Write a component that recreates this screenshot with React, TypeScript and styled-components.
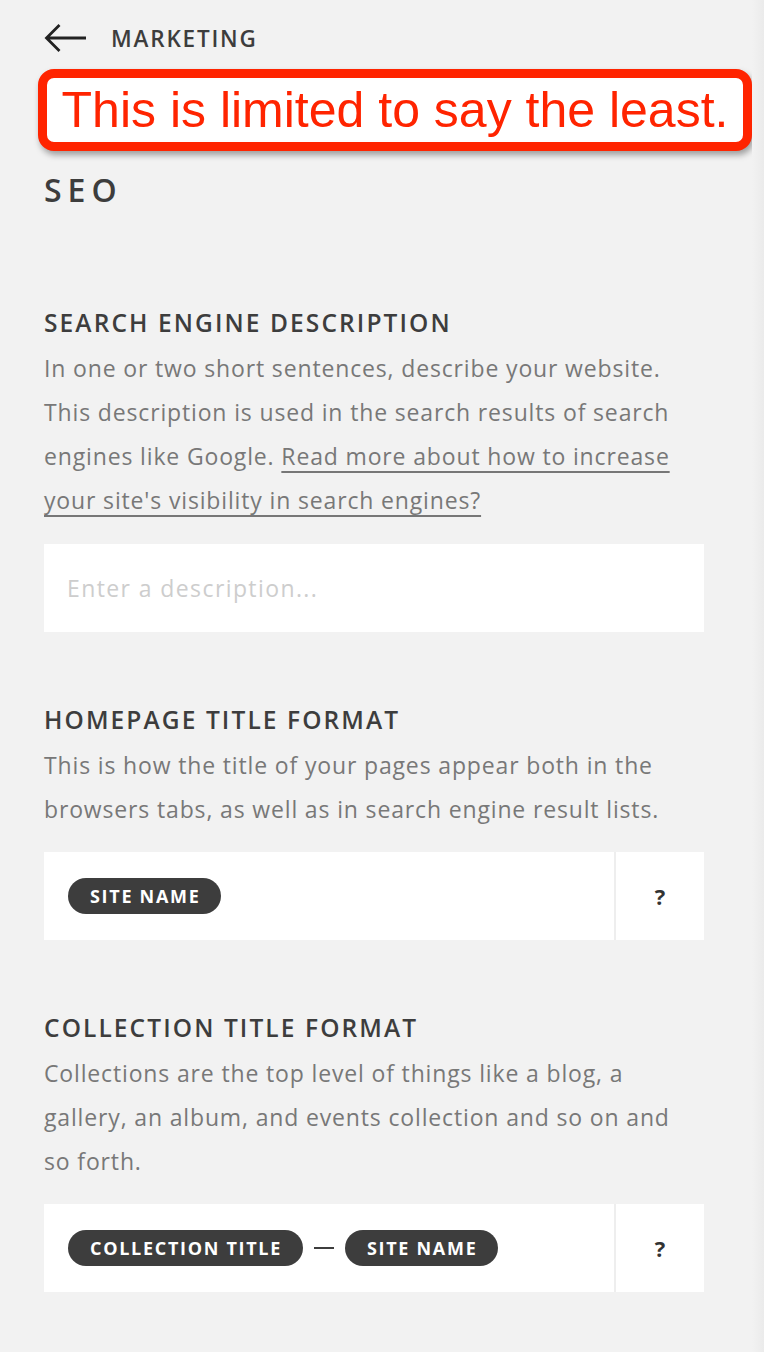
import React from "react";
import styled, { createGlobalStyle } from "styled-components";

const GlobalStyle = createGlobalStyle`
  html, body {
    margin: 0;
    padding: 0;
    background: #f2f2f2;
  }
  body {
    font-family: "Open Sans", "Liberation Sans", sans-serif;
    -webkit-font-smoothing: antialiased;
  }
  * { box-sizing: border-box; }
`;

const Page = styled.div`
  display: flex;
  min-height: 100vh;
  background: #f2f2f2;
`;

const Main = styled.main`
  flex: 1;
  padding: 16px 0 40px 44px;
  display: flex;
  flex-direction: column;
`;

const ScrollEdge = styled.div`
  width: 12px;
  flex: none;
  background: linear-gradient(to right, #f2f2f2 0%, #ebebeb 100%);
`;

const Header = styled.header`
  display: flex;
  align-items: center;
  gap: 23px;
  height: 44px;
`;

const BackButton = styled.button`
  border: 0;
  background: none;
  padding: 0;
  display: flex;
  align-items: center;
  cursor: pointer;
`;

const HeaderTitle = styled.span`
  font-size: 22.5px;
  font-weight: 600;
  letter-spacing: 1.8px;
  color: #3d3d3d;
  text-transform: uppercase;
`;

const Annotation = styled.div`
  margin: 9px 0 0 -6px;
  width: 714px;
  height: 82px;
  border: 9px solid #ff2400;
  border-radius: 16px;
  background: #fff;
  box-shadow: 2px 4px 6px rgba(0, 0, 0, 0.35);
  display: flex;
  align-items: center;
  justify-content: center;
`;

const AnnotationText = styled.span`
  font-family: "Liberation Sans", Arial, sans-serif;
  font-size: 50px;
  line-height: 1;
  color: #ff2400;
  white-space: nowrap;
`;

const PageTitle = styled.h1`
  margin: 19px 0 0;
  font-size: 32px;
  line-height: 40px;
  font-weight: 600;
  color: #3d3d3d;
  letter-spacing: 6px;
`;

const Section = styled.section<{ $first?: boolean }>`
  margin-top: ${(p) => (p.$first ? "91px" : "66px")};
  width: 660px;
`;

const SectionTitle = styled.h2`
  margin: 0;
  font-size: 24.5px;
  line-height: 44px;
  font-weight: 600;
  color: #3d3d3d;
  letter-spacing: 2.1px;
  text-transform: uppercase;
  white-space: nowrap;
`;

const Description = styled.p`
  margin: 0;
  padding-top: 1px;
  width: 720px;
  font-size: 23px;
  line-height: 44px;
  color: #787878;
  white-space: nowrap;
  letter-spacing: 0.85px;
`;

const Link = styled.a`
  color: inherit;
  text-decoration: underline;
  text-decoration-thickness: 2px;
  text-underline-offset: 6px;
  text-decoration-skip-ink: none;
  text-decoration-color: #777;
`;

const DescriptionInput = styled.input`
  display: block;
  margin-top: 22px;
  width: 660px;
  height: 88px;
  border: 0;
  outline: none;
  background: #fff;
  padding: 0 23px;
  font-family: "Open Sans", "Liberation Sans", sans-serif;
  font-size: 23px;
  letter-spacing: 1.4px;
  color: #333;
  &::placeholder {
    color: #cdcdcd;
  }
`;

const FormatBox = styled.div`
  margin-top: 21px;
  display: flex;
  height: 88px;
  background: #fff;
`;

const TokenRow = styled.div`
  flex: 1;
  display: flex;
  align-items: center;
  padding-left: 24px;
  gap: 11px;
`;

const Token = styled.span`
  display: inline-flex;
  align-items: center;
  height: 36px;
  padding: 0 21px 0 22px;
  border-radius: 18px;
  background: #3d3d3d;
  color: #fff;
  font-weight: 700;
  font-size: 18px;
  letter-spacing: 1.7px;
  text-transform: uppercase;
  white-space: nowrap;
`;

const Dash = styled.span`
  width: 20px;
  height: 2px;
  background: #3d3d3d;
`;

const HelpCell = styled.button`
  width: 90px;
  flex: none;
  border: 0;
  border-left: 2px solid #eeeeee;
  background: #fff;
  display: flex;
  align-items: center;
  justify-content: center;
  font-family: "Open Sans", "Liberation Sans", sans-serif;
  font-weight: 700;
  font-size: 22px;
  color: #333;
  cursor: pointer;
  padding: 0;
`;

const BackArrow = () => (
  <svg width="44" height="30" viewBox="0 0 44 30" fill="none">
    <path
      d="M2.5 15H42M15.5 2L2.5 15L15.5 28"
      stroke="#222"
      strokeWidth="2.8"
      strokeLinecap="butt"
      strokeLinejoin="miter"
    />
  </svg>
);

export default function App() {
  return (
    <>
      <GlobalStyle />
      <Page>
        <Main>
          <Header>
            <BackButton aria-label="Back">
              <BackArrow />
            </BackButton>
            <HeaderTitle>Marketing</HeaderTitle>
          </Header>

          <Annotation>
            <AnnotationText>This is limited to say the least.</AnnotationText>
          </Annotation>

          <PageTitle>SEO</PageTitle>

          <Section $first>
            <SectionTitle>Search Engine Description</SectionTitle>
            <Description>
              In one or two short sentences, describe your website.
              <br />
              This description is used in the search results of search
              <br />
              engines like Google.{" "}
              <Link href="#">
                Read more about how to increase
                <br />
                your site's visibility in search engines?
              </Link>
            </Description>
            <DescriptionInput placeholder="Enter a description..." />
          </Section>

          <Section>
            <SectionTitle>Homepage Title Format</SectionTitle>
            <Description>
              This is how the title of your pages appear both in the
              <br />
              browsers tabs, as well as in search engine result lists.
            </Description>
            <FormatBox>
              <TokenRow>
                <Token>Site Name</Token>
              </TokenRow>
              <HelpCell>?</HelpCell>
            </FormatBox>
          </Section>

          <Section>
            <SectionTitle>Collection Title Format</SectionTitle>
            <Description>
              Collections are the top level of things like a blog, a
              <br />
              gallery, an album, and events collection and so on and
              <br />
              so forth.
            </Description>
            <FormatBox>
              <TokenRow>
                <Token>Collection Title</Token>
                <Dash />
                <Token>Site Name</Token>
              </TokenRow>
              <HelpCell>?</HelpCell>
            </FormatBox>
          </Section>
        </Main>
        <ScrollEdge />
      </Page>
    </>
  );
}
